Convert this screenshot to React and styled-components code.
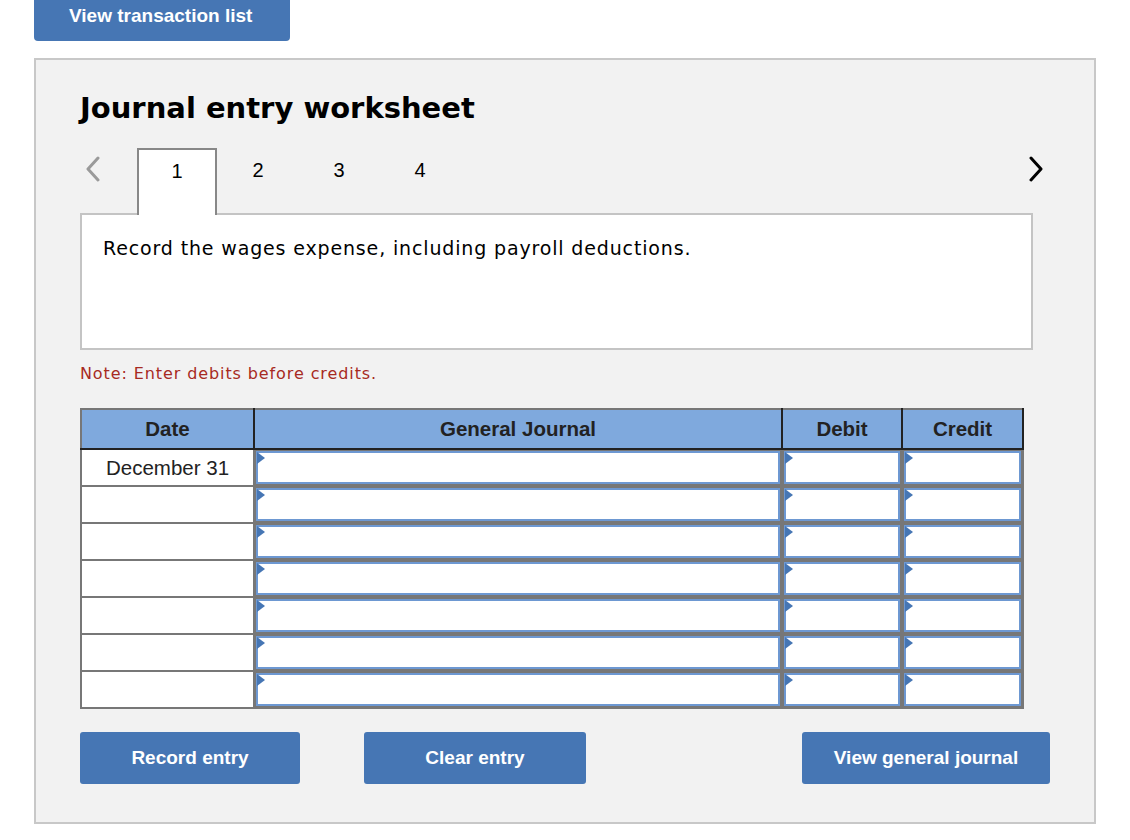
import React from "react";
import styled, { createGlobalStyle } from "styled-components";

const Global = createGlobalStyle`
  html, body { margin: 0; padding: 0; background: #ffffff; }
  body { font-family: "Liberation Sans", Arial, sans-serif; }
`;

const Page = styled.div`
  width: 1130px;
  padding: 0 34px;
  box-sizing: border-box;
`;

const BlueButton = styled.button`
  background: #4676b4;
  color: #ffffff;
  border: none;
  border-radius: ${(p) => (p.$top ? "0 0 4px 4px" : "3px")};
  font-family: "Liberation Sans", Arial, sans-serif;
  font-weight: bold;
  font-size: 19px;
  height: ${(p) => p.$h || 52}px;
  width: ${(p) => p.$w}px;
  padding: 0;
  cursor: pointer;
  text-align: ${(p) => (p.$top ? "left" : "center")};
  padding-left: ${(p) => (p.$top ? "35px" : "0")};
`;

const TopBar = styled.div`
  display: flex;
  height: 41px;
  margin-bottom: 17px;
  & > button { padding-bottom: 9px; }
`;

const Panel = styled.div`
  background: #f2f2f2;
  border: 2px solid #c8c8c8;
  height: 766px;
  box-sizing: border-box;
  padding: 0 44px 0 44px;
`;

const Title = styled.h1`
  margin: 0;
  padding-top: 28px;
  height: 55px;
  font-family: "DejaVu Sans", Verdana, sans-serif;
  font-weight: bold;
  font-size: 29px;
  color: #000;
  line-height: 40px;
`;

const TabRow = styled.div`
  display: flex;
  align-items: flex-end;
  height: 66px;
  margin-top: 4px;
`;

const Arrow = styled.div`
  width: 57px;
  height: 44px;
  box-sizing: border-box;
  display: flex;
  align-items: center;
  justify-content: ${(p) => (p.$right ? "flex-end" : "flex-start")};
  padding: ${(p) => (p.$right ? "0 7px 0 0" : "0 0 0 6px")};
  align-self: flex-start;
`;

const Tab = styled.div`
  width: 80px;
  box-sizing: border-box;
  display: flex;
  justify-content: center;
  font-family: "Liberation Sans", Arial, sans-serif;
  font-size: 20px;
  color: #000;
  ${(p) =>
    p.$active
      ? `background:#fff;border:2px solid #888;border-bottom:none;height:67px;margin-bottom:-2px;position:relative;z-index:2;padding-top:10px;`
      : `height:66px;padding-top:12px;`}
  margin-right: 1px;
`;

const Spacer = styled.div`
  flex: 1;
`;

const Prompt = styled.div`
  width: 953px;
  height: 137px;
  box-sizing: border-box;
  background: #fff;
  border: 2px solid #c4c4c4;
  padding: 22px 21px;
  font-family: "DejaVu Sans", Verdana, sans-serif;
  font-size: 19px;
  letter-spacing: 0.85px;
  line-height: 22px;
  color: #000;
  position: relative;
  z-index: 1;
`;

const Note = styled.div`
  margin-top: 14px;
  font-family: "DejaVu Sans", Verdana, sans-serif;
  font-size: 16px;
  letter-spacing: 0.9px;
  color: #a72a22;
  height: 20px;
`;

const Table = styled.table`
  margin-top: 24px;
  border-collapse: collapse;
  width: 942px;
  table-layout: fixed;
  border: 2px solid #777;
`;

const Th = styled.th`
  background: #7fa9dd;
  color: #222;
  font-family: "Liberation Sans", Arial, sans-serif;
  font-weight: bold;
  font-size: 20.5px;
  height: 38px;
  padding: 0;
  border-right: 2px solid #222;
  border-bottom: 2px solid #222;
  border-top: 2px solid #777;
  &:first-child { border-left: 2px solid #777; }
`;

const Td = styled.td`
  background: ${(p) => (p.$input ? "#777" : "#fff")};
  border: 2px solid #777;
  height: 33px;
  padding: ${(p) => (p.$input ? "1px" : "0")};
  text-align: center;
  font-family: "Liberation Sans", Arial, sans-serif;
  font-size: 20.5px;
  color: #222;
`;

const Field = styled.div`
  position: relative;
  height: 32.7px;
  box-sizing: border-box;
  background: #fff;
  border: 2px solid #6d98d2;
  &::before {
    content: "";
    position: absolute;
    left: -1px;
    top: -1px;
    border-top: 6px solid transparent;
    border-bottom: 6px solid transparent;
    border-left: 8px solid #4676b4;
  }
`;

const ButtonRow = styled.div`
  display: flex;
  margin-top: 23px;
`;

const Gap = styled.div`
  width: 64px;
`;

const Chevron = ({ dir, color }) => (
  <svg width="14" height="26" viewBox="0 0 14 26">
    <path
      d={dir === "left" ? "M12 2 L2 13 L12 24" : "M2 2 L12 13 L2 24"}
      fill="none"
      stroke={color}
      strokeWidth="3"
      strokeLinecap="round"
      strokeLinejoin="round"
    />
  </svg>
);

const rows = ["December 31", "", "", "", "", "", ""];

export default function App() {
  return (
    <Page>
      <Global />
      <TopBar>
        <BlueButton $top $w={256} $h={41}>View transaction list</BlueButton>
      </TopBar>
      <Panel>
        <Title>Journal entry worksheet</Title>
        <TabRow>
          <Arrow>
            <Chevron dir="left" color="#9a9a9a" />
          </Arrow>
          <Tab $active>1</Tab>
          <Tab>2</Tab>
          <Tab>3</Tab>
          <Tab>4</Tab>
          <Spacer />
          <Arrow $right>
            <Chevron dir="right" color="#000" />
          </Arrow>
        </TabRow>
        <Prompt>Record the wages expense, including payroll deductions.</Prompt>
        <Note>Note: Enter debits before credits.</Note>
        <Table>
          <colgroup>
            <col style={{ width: 173 }} />
            <col style={{ width: 528 }} />
            <col style={{ width: 120 }} />
            <col style={{ width: 121 }} />
          </colgroup>
          <thead>
            <tr>
              <Th>Date</Th>
              <Th>General Journal</Th>
              <Th>Debit</Th>
              <Th>Credit</Th>
            </tr>
          </thead>
          <tbody>
            {rows.map((d, i) => (
              <tr key={i}>
                <Td>{d}</Td>
                <Td $input><Field /></Td>
                <Td $input><Field /></Td>
                <Td $input><Field /></Td>
              </tr>
            ))}
          </tbody>
        </Table>
        <ButtonRow>
          <BlueButton $w={220}>Record entry</BlueButton>
          <Gap />
          <BlueButton $w={222}>Clear entry</BlueButton>
          <Spacer />
          <BlueButton $w={248}>View general journal</BlueButton>
        </ButtonRow>
      </Panel>
    </Page>
  );
}
